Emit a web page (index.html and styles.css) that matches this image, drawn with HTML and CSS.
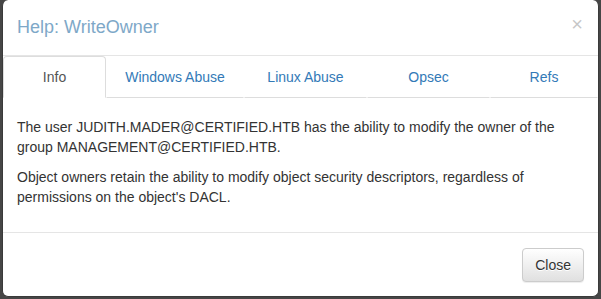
FILE: index.html
```html
<!DOCTYPE html>
<html lang="en">
<head>
<meta charset="utf-8">
<title>Help: WriteOwner</title>
<link rel="stylesheet" href="styles.css">
</head>
<body>
<div class="modal">
  <div class="modal-header">
    <h4 class="modal-title">Help: WriteOwner</h4>
    <button class="close" type="button" aria-label="Close">×</button>
  </div>
  <ul class="tabs">
    <li class="tab active"><a>Info</a></li>
    <li class="tab"><a>Windows Abuse</a></li>
    <li class="tab"><a>Linux Abuse</a></li>
    <li class="tab"><a>Opsec</a></li>
    <li class="tab"><a>Refs</a></li>
  </ul>
  <div class="modal-body">
    <p>The user JUDITH.MADER@CERTIFIED.HTB has the ability to modify the owner of the group MANAGEMENT@CERTIFIED.HTB.</p>
    <p>Object owners retain the ability to modify object security descriptors, regardless of permissions on the object's DACL.</p>
  </div>
  <div class="modal-footer">
    <button class="btn" type="button">Close</button>
  </div>
</div>
</body>
</html>
```
FILE: styles.css
```css
* { box-sizing: border-box; }
html, body {
  margin: 0;
  padding: 0;
  height: 100%;
}
body {
  background: #464646;
  font-family: "Liberation Sans", Arial, sans-serif;
  font-size: 14px;
  line-height: 20px;
  color: #333;
  overflow: hidden;
}
.modal {
  margin-left: 2px;
  width: 597px;
  background: #fff;
  border: 1px solid #3a3a3a;
  border-top: 0;
  border-radius: 6px;
}
.modal-header {
  display: flex;
  align-items: flex-start;
  justify-content: space-between;
  padding: 14px 15px 15px 14px;
  border-bottom: 1px solid #e5e5e5;
}
.modal-title {
  margin: 0;
  font-size: 18px;
  font-weight: normal;
  line-height: 26px;
  color: #7ea8c8;
}
.close {
  margin-top: 0;
  padding: 0;
  border: 0;
  background: transparent;
  font-family: "Liberation Sans", Arial, sans-serif;
  font-size: 20px;
  font-weight: normal;
  line-height: 1;
  color: #000;
  opacity: 0.22;
}
.tabs {
  display: grid;
  grid-template-columns: 103px 138px 123px 123px 1fr;
  margin: 0;
  padding: 0;
  list-style: none;
}
.tab a {
  display: block;
  padding: 10px 15px;
  text-align: center;
  color: #337ab7;
  border: 1px solid transparent;
  border-bottom: 1px solid #ddd;
  border-radius: 4px 4px 0 0;
  white-space: nowrap;
}
.tab.active a {
  color: #555;
  border: 1px solid #ddd;
  border-bottom-color: #fff;
}
.modal-body {
  padding: 19px 15px 15px 14px;
}
.modal-body p {
  margin: 0 0 10px;
}
.modal-footer {
  display: flex;
  justify-content: flex-end;
  padding: 15px 14px 14px 15px;
  border-top: 1px solid #e5e5e5;
}
.btn {
  padding: 6px 12px;
  font-family: "Liberation Sans", Arial, sans-serif;
  font-size: 14px;
  line-height: 20px;
  color: #333;
  text-shadow: 0 1px 0 #fff;
  background-image: linear-gradient(to bottom, #fff 0, #e0e0e0 100%);
  border: 1px solid #ccc;
  border-radius: 4px;
  box-shadow: inset 0 1px 0 rgba(255,255,255,.15), 0 1px 1px rgba(0,0,0,.075);
}
```
